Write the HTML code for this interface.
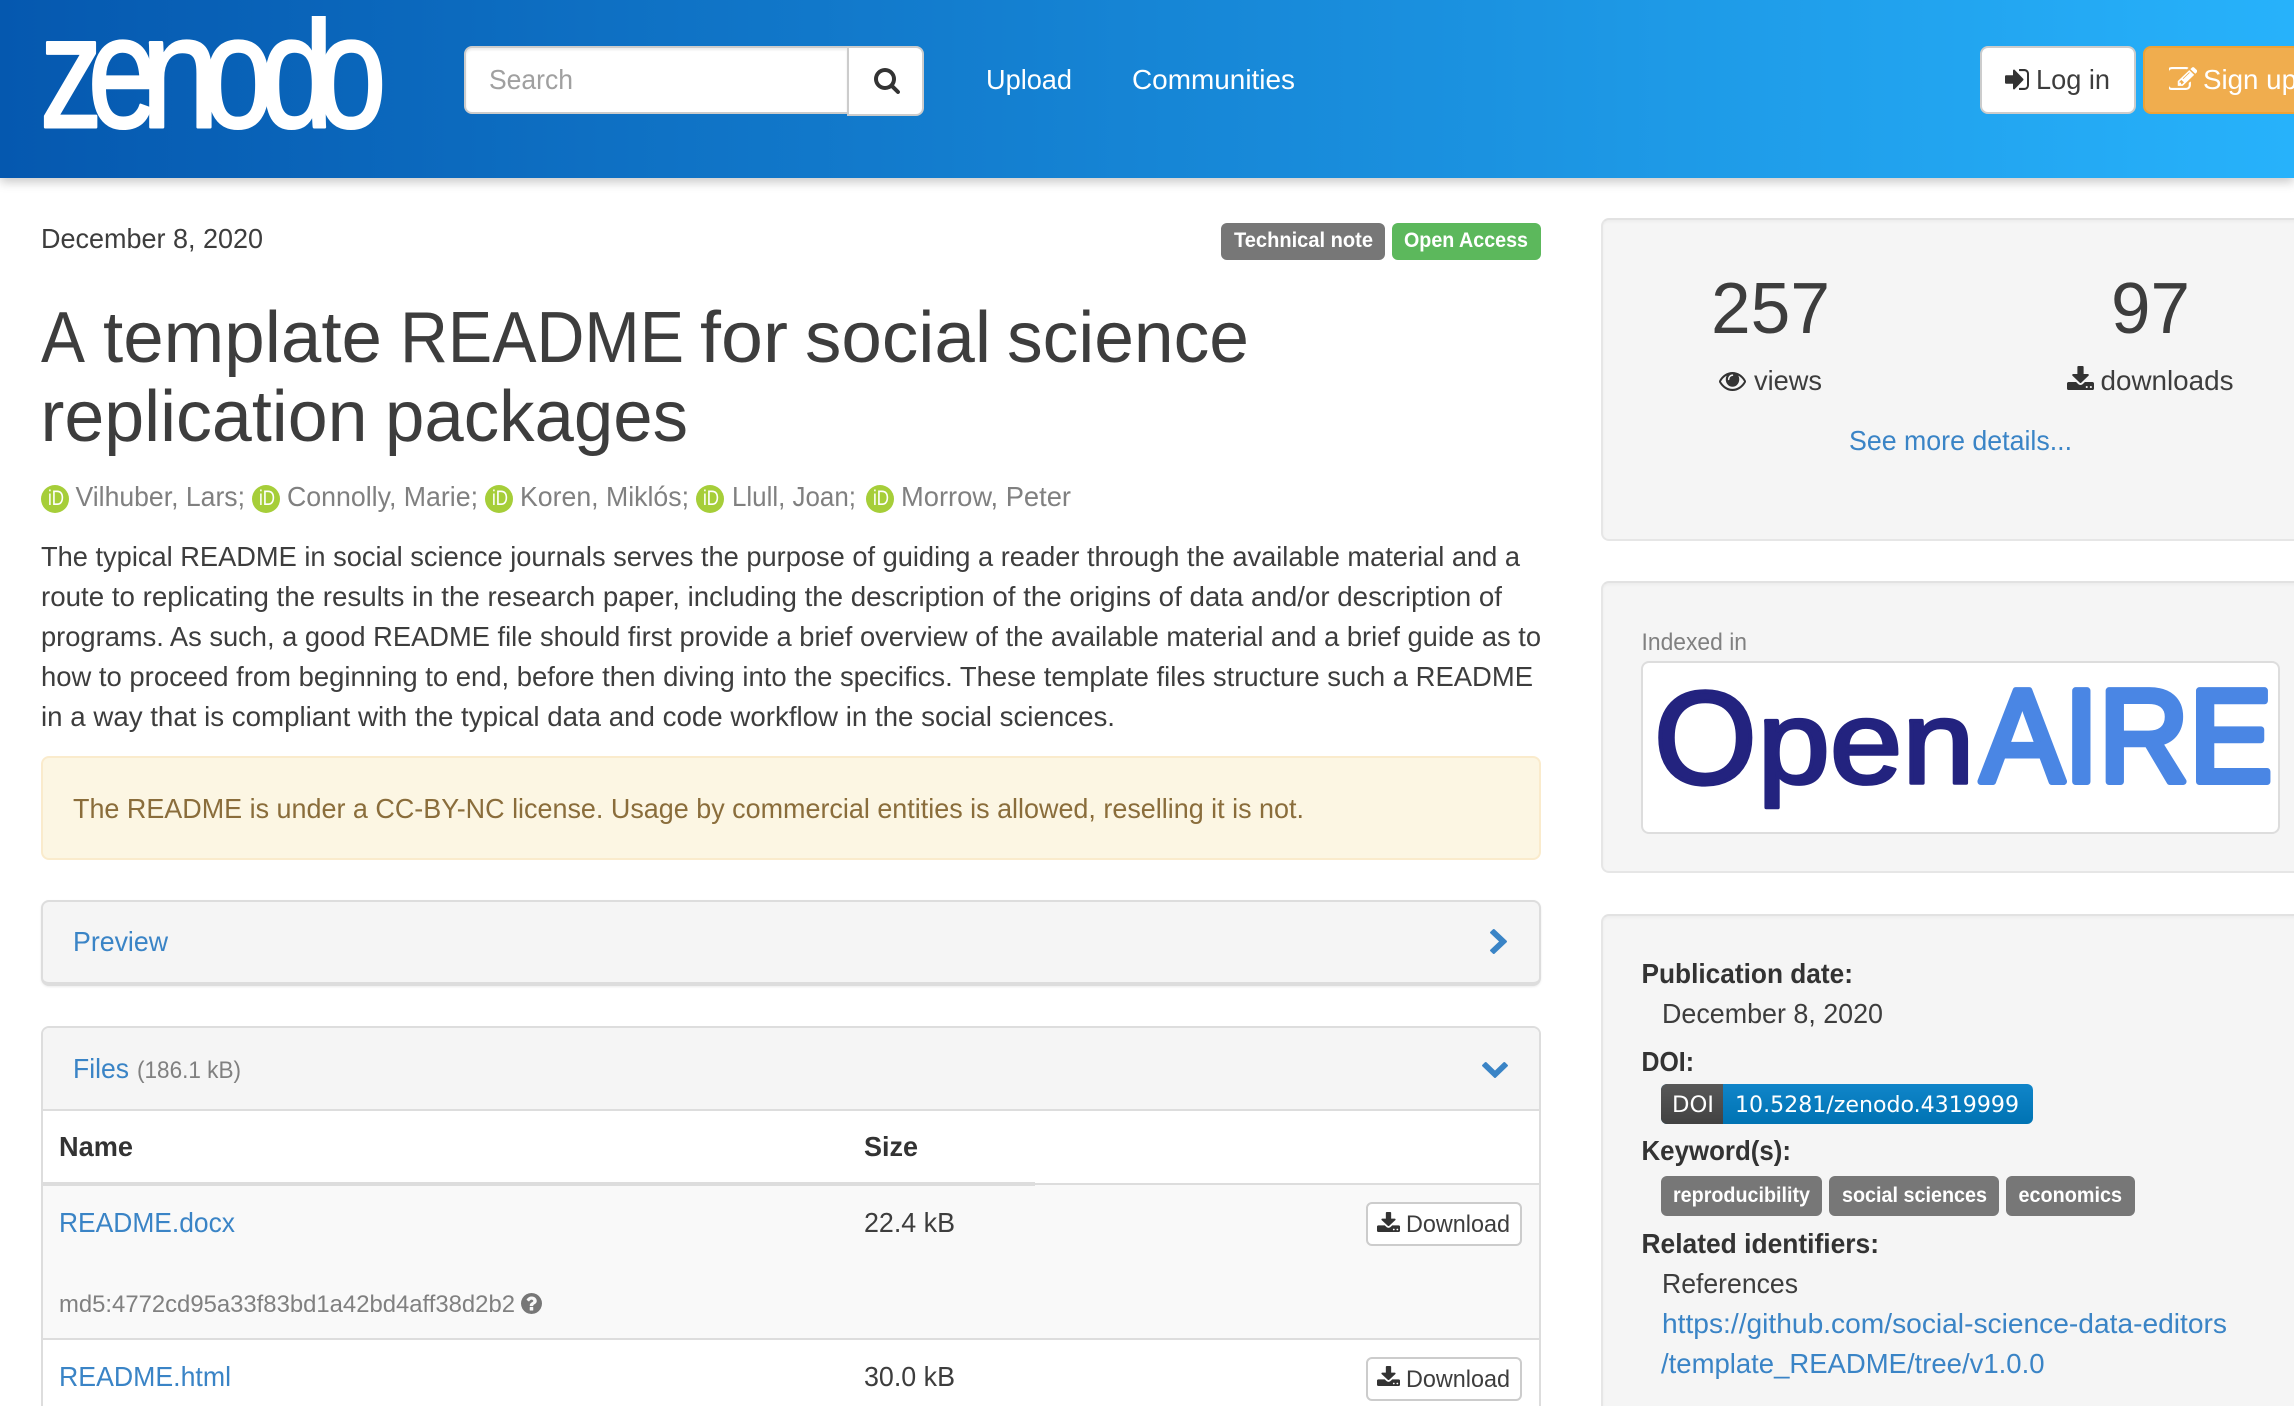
<!DOCTYPE html>
<html lang="en"><head><meta charset="utf-8"><title>A template README for social science replication packages</title>
<style>
html{margin:0;padding:0;height:1406px;overflow:hidden;background:#fff}
body{margin:0;padding:0;height:1406px;overflow:hidden;background:#fff;font-family:"Liberation Sans",sans-serif}
#p{position:relative;width:2294px;height:1406px;overflow:hidden}
.b{position:absolute;box-sizing:border-box}
svg#t{position:absolute;left:0;top:0;z-index:5}
text{font-family:"Liberation Sans",sans-serif;font-size:28px;fill:#3d3d3d;white-space:pre}
.w{fill:#fff}.l{fill:#3a84c6}.g{fill:#808080}.bd{font-weight:700;fill:#333}
.s{font-size:24.5px}.lb{font-size:21px;font-weight:700;fill:#fff}
.z{font-size:160px;fill:#fff;stroke:#fff;stroke-width:3;stroke-linejoin:round}
.id{font-size:21px;fill:#fff}
.h{font-size:72px}
.well{background:#f5f5f5;border:2px solid #e6e6e6;border-top-color:#e2e2e2;border-radius:8px;box-shadow:inset 0 2px 2px rgba(0,0,0,.03)}
.dl{background:#fff;border:2px solid #ccc;border-radius:6px}
</style></head><body><div id="p">
<div class="b" style="left:0;top:0;width:2294px;height:178px;background:linear-gradient(to right,#0558af 0%,#27b2fb 100%);box-shadow:0 4px 10px rgba(0,0,0,.22)"></div>
<div class="b" style="left:464px;top:46px;width:385px;height:68px;background:#fff;border:2px solid #ccc;border-radius:8px 0 0 8px;box-shadow:inset 0 2px 2px rgba(0,0,0,.08)"></div>
<div class="b" style="left:847px;top:46px;width:77px;height:70px;background:#fff;border:2px solid #ccc;border-radius:0 8px 8px 0"></div>
<div class="b" style="left:1980px;top:46px;width:156px;height:68px;background:#fff;border:2px solid #ccc;border-radius:8px"></div>
<div class="b" style="left:2143px;top:46px;width:170px;height:68px;background:#f0ad4e;border:2px solid #eea236;border-radius:8px"></div>

<div class="b" style="left:1221px;top:223px;width:164px;height:37px;background:#777;border-radius:6px"></div>
<div class="b" style="left:1392px;top:223px;width:149px;height:37px;background:#5cb85c;border-radius:6px"></div>

<div class="b" style="left:41px;top:756px;width:1500px;height:104px;background:#fcf6e3;border:2px solid #faebcc;border-radius:8px"></div>

<div class="b" style="left:41px;top:900px;width:1500px;height:86px;background:#f5f5f5;border:2px solid #ddd;border-bottom-width:4px;border-radius:8px;box-shadow:0 1px 2px rgba(0,0,0,.08)"></div>

<div class="b" style="left:41px;top:1026px;width:1500px;height:440px;background:#fff;border:2px solid #ddd;border-radius:8px 8px 0 0"></div>
<div class="b" style="left:43px;top:1028px;width:1496px;height:83px;background:#f5f5f5;border-bottom:2px solid #ddd;border-radius:6px 6px 0 0"></div>
<div class="b" style="left:43px;top:1183px;width:1496px;height:155px;background:#f9f9f9;border-top:2px solid #ddd"></div>
<div class="b" style="left:43px;top:1182px;width:992px;height:4px;background:#ddd"></div>
<div class="b" style="left:43px;top:1338px;width:1496px;height:2px;background:#ddd"></div>
<div class="b dl" style="left:1366px;top:1202px;width:156px;height:44px"></div>
<div class="b dl" style="left:1366px;top:1357px;width:156px;height:44px"></div>

<div class="b well" style="left:1601px;top:218px;width:720px;height:323px"></div>
<div class="b well" style="left:1601px;top:581px;width:720px;height:292px"></div>
<div class="b well" style="left:1601px;top:914px;width:720px;height:540px"></div>
<div class="b" style="left:1641px;top:661px;width:639px;height:173px;background:#fff;border:2px solid #ddd;border-radius:8px"></div>

<div class="b" style="left:1661px;top:1084px;width:372px;height:40px;border-radius:6px;overflow:hidden;background:linear-gradient(#1085c9,#0073b3)"><div style="width:62px;height:40px;background:linear-gradient(#585858,#424242)"></div></div>
<div class="b" style="left:1661px;top:1176px;width:161px;height:40px;background:#777;border-radius:6px"></div>
<div class="b" style="left:1829px;top:1176px;width:170px;height:40px;background:#777;border-radius:6px"></div>
<div class="b" style="left:2006px;top:1176px;width:129px;height:40px;background:#777;border-radius:6px"></div>

<svg id="t" width="2294" height="1406" viewBox="0 0 2294 1406" xmlns="http://www.w3.org/2000/svg">
<clipPath id="lc"><rect x="0" y="16" width="500" height="130"/></clipPath>
<!-- logo -->
<g clip-path="url(#lc)">
<text class="z" transform="translate(40,127) scale(.78,1)">z</text>
<text class="z" transform="translate(88,127) scale(.78,1)">e</text>
<text class="z" transform="translate(140.7,127) scale(.885,1)">n</text>
<text class="z" transform="translate(203,127) scale(.79,1)">o</text>
<text class="z" transform="translate(260.4,127) scale(.82,1)">d</text>
<text class="z" transform="translate(316,127) scale(.79,1)">o</text>
</g>

<text x="489" y="89" textLength="84" lengthAdjust="spacingAndGlyphs" style="fill:#a0a0a0">Search</text>
<svg x="874" y="68" width="26" height="26" viewBox="64 128 1664 1664"><path fill="#333" d="M1216 832q0-185-131.5-316.5t-316.5-131.5-316.5 131.5-131.5 316.5 131.5 316.5 316.5 131.5 316.5-131.5 131.5-316.5zm512 832q0 52-38 90t-90 38q-54 0-90-38l-343-342q-179 124-399 124-143 0-273.5-55.5t-225-150-150-225-55.5-273.5 55.5-273.5 150-225 225-150 273.5-55.5 273.5 55.5 225 150 150 225 55.5 273.5q0 220-124 399l343 343q37 37 37 90z"/></svg>
<text x="986" y="89" textLength="86" lengthAdjust="spacingAndGlyphs" class="w">Upload</text>
<text x="1132" y="89" textLength="163" lengthAdjust="spacingAndGlyphs" class="w">Communities</text>

<svg x="2005" y="69" width="24" height="21" viewBox="128 256 1536 1280" preserveAspectRatio="none"><path fill="#333" d="M1312 896q0 26-19 45l-544 544q-19 19-45 19t-45-19-19-45v-288h-448q-26 0-45-19t-19-45v-384q0-26 19-45t45-19h448v-288q0-26 19-45t45-19 45 19l544 544q19 19 19 45zm352-352v704q0 119-84.5 203.5t-203.5 84.5h-320q-13 0-22.5-9.5t-9.5-22.5q0-4-1-20t-.5-26.5 3-23.5 10-19.5 20.5-6.5h320q66 0 113-47t47-113v-704q0-66-47-113t-113-47h-320q-13 0-22.5-9.5t-9.5-22.5q0-4-1-20t-.5-26.5 3-23.5 10-19.5 20.5-6.5h320q119 0 203.5 84.5t84.5 203.5z"/></svg>
<text x="2036" y="89" textLength="74" lengthAdjust="spacingAndGlyphs">Log in</text>
<svg x="2169" y="67" width="28" height="23" viewBox="128 128 1636 1408" preserveAspectRatio="none"><path fill="#fff" d="M888 1184l116-116-152-152-116 116v56h96v96h56zm440-720q-16-16-33 1l-350 350q-17 17-1 33t33-1l350-350q17-17 1-33zm80 594v190q0 119-84.5 203.5t-203.5 84.5h-832q-119 0-203.5-84.5t-84.5-203.5v-832q0-119 84.5-203.5t203.5-84.5h832q63 0 117 25 15 7 18 23 3 17-9 29l-49 49q-14 14-32 8-23-6-45-6h-832q-66 0-113 47t-47 113v832q0 66 47 113t113 47h832q66 0 113-47t47-113v-126q0-13 9-22l64-64q15-15 35-7t20 29zm-96-738l288 288-672 672h-288v-288zm444 132l-92 92-288-288 92-92q28-28 68-28t68 28l152 152q28 28 28 68t-28 68z"/></svg>
<text x="2203" y="89" textLength="94" lengthAdjust="spacingAndGlyphs" class="w">Sign up</text>

<text x="41" y="248" textLength="222" lengthAdjust="spacingAndGlyphs">December 8, 2020</text>
<text x="1234" y="247" textLength="139" lengthAdjust="spacingAndGlyphs" class="lb">Technical note</text>
<text x="1404" y="247" textLength="124" lengthAdjust="spacingAndGlyphs" class="lb">Open Access</text>

<text x="41" y="362" textLength="44" lengthAdjust="spacingAndGlyphs" class="h">A</text>
<text x="103" y="362" textLength="279" lengthAdjust="spacingAndGlyphs" class="h">template</text>
<text x="400" y="362" textLength="284" lengthAdjust="spacingAndGlyphs" class="h">README</text>
<text x="700" y="362" textLength="88" lengthAdjust="spacingAndGlyphs" class="h">for</text>
<text x="805" y="362" textLength="186" lengthAdjust="spacingAndGlyphs" class="h">social</text>
<text x="1007" y="362" textLength="242" lengthAdjust="spacingAndGlyphs" class="h">science</text>
<text x="40.5" y="441" textLength="327" lengthAdjust="spacingAndGlyphs" class="h">replication</text>
<text x="385" y="441" textLength="303" lengthAdjust="spacingAndGlyphs" class="h">packages</text>

<circle cx="55" cy="499" r="14" fill="#a6ce39"/><text x="48" y="505" textLength="16" lengthAdjust="spacingAndGlyphs" class="id">iD</text>
<text x="75.5" y="506" textLength="169.5" lengthAdjust="spacingAndGlyphs" class="g">Vilhuber, Lars;</text>
<circle cx="266" cy="499" r="14" fill="#a6ce39"/><text x="259" y="505" textLength="16" lengthAdjust="spacingAndGlyphs" class="id">iD</text>
<text x="287" y="506" textLength="191" lengthAdjust="spacingAndGlyphs" class="g">Connolly, Marie;</text>
<circle cx="499" cy="499" r="14" fill="#a6ce39"/><text x="492" y="505" textLength="16" lengthAdjust="spacingAndGlyphs" class="id">iD</text>
<text x="520" y="506" textLength="169" lengthAdjust="spacingAndGlyphs" class="g">Koren, Miklós;</text>
<circle cx="710" cy="499" r="14" fill="#a6ce39"/><text x="703" y="505" textLength="16" lengthAdjust="spacingAndGlyphs" class="id">iD</text>
<text x="732" y="506" textLength="124" lengthAdjust="spacingAndGlyphs" class="g">Llull, Joan;</text>
<circle cx="880" cy="499" r="14" fill="#a6ce39"/><text x="873" y="505" textLength="16" lengthAdjust="spacingAndGlyphs" class="id">iD</text>
<text x="901" y="506" textLength="170" lengthAdjust="spacingAndGlyphs" class="g">Morrow, Peter</text>

<text x="41" y="566" textLength="1479" lengthAdjust="spacingAndGlyphs">The typical README in social science journals serves the purpose of guiding a reader through the available material and a</text>
<text x="41" y="606" textLength="1461" lengthAdjust="spacingAndGlyphs">route to replicating the results in the research paper, including the description of the origins of data and/or description of</text>
<text x="41" y="646" textLength="1500" lengthAdjust="spacingAndGlyphs">programs. As such, a good README file should first provide a brief overview of the available material and a brief guide as to</text>
<text x="41" y="686" textLength="1492" lengthAdjust="spacingAndGlyphs">how to proceed from beginning to end, before then diving into the specifics. These template files structure such a README</text>
<text x="41" y="726" textLength="1074" lengthAdjust="spacingAndGlyphs">in a way that is compliant with the typical data and code workflow in the social sciences.</text>

<text x="73" y="818" textLength="1231" lengthAdjust="spacingAndGlyphs" style="fill:#8a6d3b">The README is under a CC-BY-NC license. Usage by commercial entities is allowed, reselling it is not.</text>

<text x="73" y="951" textLength="95" lengthAdjust="spacingAndGlyphs" class="l">Preview</text>
<svg x="1490" y="929" width="17" height="25" viewBox="533 -1702 1035 1612" preserveAspectRatio="none"><g transform="rotate(-90)"><path fill="#3a84c6" d="M1683 808l-742 741q-19 19-45 19t-45-19l-742-741q-19-19-19-45.5t19-45.5l166-165q19-19 45-19t45 19l531 531 531-531q19-19 45-19t45 19l166 165q19 19 19 45.5t-19 45.5z"/></g></svg>

<text x="73" y="1078" textLength="56" lengthAdjust="spacingAndGlyphs" class="l">Files</text>
<text x="137" y="1078" textLength="104" lengthAdjust="spacingAndGlyphs" class="g s">(186.1 kB)</text>
<svg x="1482" y="1062" width="26" height="16" viewBox="90 533 1612 1035" preserveAspectRatio="none"><path fill="#3a84c6" d="M1683 808l-742 741q-19 19-45 19t-45-19l-742-741q-19-19-19-45.5t19-45.5l166-165q19-19 45-19t45 19l531 531 531-531q19-19 45-19t45 19l166 165q19 19 19 45.5t-19 45.5z"/></svg>

<text x="59" y="1156" textLength="74" lengthAdjust="spacingAndGlyphs" class="bd">Name</text>
<text x="864" y="1156" textLength="54" lengthAdjust="spacingAndGlyphs" class="bd">Size</text>

<text x="59" y="1232" textLength="176" lengthAdjust="spacingAndGlyphs" class="l">README.docx</text>
<text x="864" y="1232" textLength="91" lengthAdjust="spacingAndGlyphs">22.4 kB</text>
<svg x="1377" y="1212" width="23" height="20" viewBox="64 0 1664 1536" preserveAspectRatio="none"><path fill="#333" d="M1344 1344q0-26-19-45t-45-19-45 19-19 45 19 45 45 19 45-19 19-45zm256 0q0-26-19-45t-45-19-45 19-19 45 19 45 45 19 45-19 19-45zm128-224v320q0 40-28 68t-68 28h-1472q-40 0-68-28t-28-68v-320q0-40 28-68t68-28h465l135 136q58 56 136 56t136-56l136-136h464q40 0 68 28t28 68zm-325-569q17 41-14 70l-448 448q-18 19-45 19t-45-19l-448-448q-31-29-14-70 17-39 59-39h256v-448q0-26 19-45t45-19h256q26 0 45 19t19 45v448h256q42 0 59 39z"/></svg>
<text x="1406" y="1232" textLength="104" lengthAdjust="spacingAndGlyphs" style="font-size:24px">Download</text>

<text x="59" y="1312" textLength="456" lengthAdjust="spacingAndGlyphs" class="g s">md5:4772cd95a33f83bd1a42bd4aff38d2b2</text>
<svg x="521" y="1293" width="21" height="21" viewBox="128 128 1536 1536" preserveAspectRatio="none"><path fill="#777" d="M1024 1376v-192q0-14-9-23t-23-9h-192q-14 0-23 9t-9 23v192q0 14 9 23t23 9h192q14 0 23-9t9-23zm256-672q0-88-55.5-163t-138.5-116-170-41q-243 0-371 213-15 24 8 42l132 100q7 6 19 6 16 0 25-12 53-68 86-92 34-24 86-24 48 0 85.5 26t37.5 59q0 38-20 61t-68 45q-63 28-115.5 86.5t-52.5 125.5v36q0 14 9 23t23 9h192q14 0 23-9t9-23q0-19 21.5-49.5t54.5-49.5q32-18 49-28.5t46-35 44.5-48 28-60.5 12.5-81zm384 192q0 209-103 385.5t-279.5 279.5-385.5 103-385.5-103-279.5-279.5-103-385.5 103-385.5 279.5-279.5 385.5-103 385.5 103 279.5 279.5 103 385.5z"/></svg>

<text x="59" y="1386" textLength="172" lengthAdjust="spacingAndGlyphs" class="l">README.html</text>
<text x="864" y="1386" textLength="91" lengthAdjust="spacingAndGlyphs">30.0 kB</text>
<svg x="1377" y="1366" width="23" height="20" viewBox="64 0 1664 1536" preserveAspectRatio="none"><path fill="#333" d="M1344 1344q0-26-19-45t-45-19-45 19-19 45 19 45 45 19 45-19 19-45zm256 0q0-26-19-45t-45-19-45 19-19 45 19 45 45 19 45-19 19-45zm128-224v320q0 40-28 68t-68 28h-1472q-40 0-68-28t-28-68v-320q0-40 28-68t68-28h465l135 136q58 56 136 56t136-56l136-136h464q40 0 68 28t28 68zm-325-569q17 41-14 70l-448 448q-18 19-45 19t-45-19l-448-448q-31-29-14-70 17-39 59-39h256v-448q0-26 19-45t45-19h256q26 0 45 19t19 45v448h256q42 0 59 39z"/></svg>
<text x="1406" y="1387" textLength="104" lengthAdjust="spacingAndGlyphs" style="font-size:24px">Download</text>

<text x="1711" y="333" textLength="119" lengthAdjust="spacingAndGlyphs" style="font-size:72px">257</text>
<text x="2111" y="333" textLength="79" lengthAdjust="spacingAndGlyphs" style="font-size:72px">97</text>
<svg x="1719" y="372" width="27" height="19" viewBox="0 384 1792 1152" preserveAspectRatio="none"><path fill="#333" d="M1664 960q-152-236-381-353 61 104 61 225 0 185-131.5 316.5t-316.5 131.5-316.5-131.5-131.5-316.5q0-121 61-225-229 117-381 353 133 205 333.5 326.5t434.5 121.5 434.5-121.5 333.5-326.5zm-720-384q0-20-14-34t-34-14q-125 0-214.5 89.5t-89.5 214.5q0 20 14 34t34 14 34-14 14-34q0-86 61-147t147-61q20 0 34-14t14-34zm848 384q0 34-20 69-140 230-376.5 368.5t-499.5 138.5-499.5-139-376.5-368q-20-35-20-69t20-69q140-229 376.5-368t499.5-139 499.5 139 376.5 368q20 35 20 69z"/></svg>
<text x="1754" y="390" textLength="68" lengthAdjust="spacingAndGlyphs">views</text>
<svg x="2067" y="366" width="27" height="24" viewBox="64 0 1664 1536" preserveAspectRatio="none"><path fill="#333" d="M1344 1344q0-26-19-45t-45-19-45 19-19 45 19 45 45 19 45-19 19-45zm256 0q0-26-19-45t-45-19-45 19-19 45 19 45 45 19 45-19 19-45zm128-224v320q0 40-28 68t-68 28h-1472q-40 0-68-28t-28-68v-320q0-40 28-68t68-28h465l135 136q58 56 136 56t136-56l136-136h464q40 0 68 28t28 68zm-325-569q17 41-14 70l-448 448q-18 19-45 19t-45-19l-448-448q-31-29-14-70 17-39 59-39h256v-448q0-26 19-45t45-19h256q26 0 45 19t19 45v448h256q42 0 59 39z"/></svg>
<text x="2100.5" y="390" textLength="133" lengthAdjust="spacingAndGlyphs">downloads</text>
<text x="1849" y="450" textLength="223" lengthAdjust="spacingAndGlyphs" class="l">See more details...</text>

<text x="1641.5" y="650" textLength="105.5" lengthAdjust="spacingAndGlyphs" class="g s">Indexed in</text>
<text x="1654" y="783.4" style="font-size:132px;fill:#23237f;stroke:#23237f;stroke-width:4;stroke-linejoin:round">O</text>
<text x="1757.6" y="783" textLength="217" lengthAdjust="spacingAndGlyphs" style="font-size:118px;fill:#23237f;stroke:#23237f;stroke-width:3.5;stroke-linejoin:round">pen</text>
<text x="1980.5" y="781.5" textLength="292" lengthAdjust="spacingAndGlyphs" style="font-size:132px;fill:#4a86e4;stroke:#4a86e4;stroke-width:7;stroke-linejoin:round">AIRE</text>

<text x="1641.5" y="983" textLength="211.5" lengthAdjust="spacingAndGlyphs" class="bd">Publication date:</text>
<text x="1662" y="1023" textLength="221" lengthAdjust="spacingAndGlyphs">December 8, 2020</text>
<text x="1641.5" y="1071" textLength="52.5" lengthAdjust="spacingAndGlyphs" class="bd">DOI:</text>
<text x="1672" y="1112" textLength="42" lengthAdjust="spacingAndGlyphs" style="font-family:'DejaVu Sans',sans-serif;font-size:22px;fill:#fff">DOI</text>
<text x="1735" y="1112" textLength="284" lengthAdjust="spacingAndGlyphs" style="font-family:'DejaVu Sans',sans-serif;font-size:22px;fill:#fff">10.5281/zenodo.4319999</text>
<text x="1641.5" y="1160" textLength="149.5" lengthAdjust="spacingAndGlyphs" class="bd">Keyword(s):</text>
<text x="1673" y="1202" textLength="137" lengthAdjust="spacingAndGlyphs" class="lb">reproducibility</text>
<text x="1842" y="1202" textLength="145" lengthAdjust="spacingAndGlyphs" class="lb">social sciences</text>
<text x="2018.5" y="1202" textLength="103.5" lengthAdjust="spacingAndGlyphs" class="lb">economics</text>
<text x="1641.5" y="1253" textLength="237.5" lengthAdjust="spacingAndGlyphs" class="bd">Related identifiers:</text>
<text x="1662" y="1293" textLength="136" lengthAdjust="spacingAndGlyphs">References</text>
<text x="1662" y="1333" textLength="565" lengthAdjust="spacingAndGlyphs" class="l">https://github.com/social-science-data-editors</text>
<text x="1661" y="1373" textLength="383.5" lengthAdjust="spacingAndGlyphs" class="l">/template_README/tree/v1.0.0</text>
</svg>
</div></body></html>
